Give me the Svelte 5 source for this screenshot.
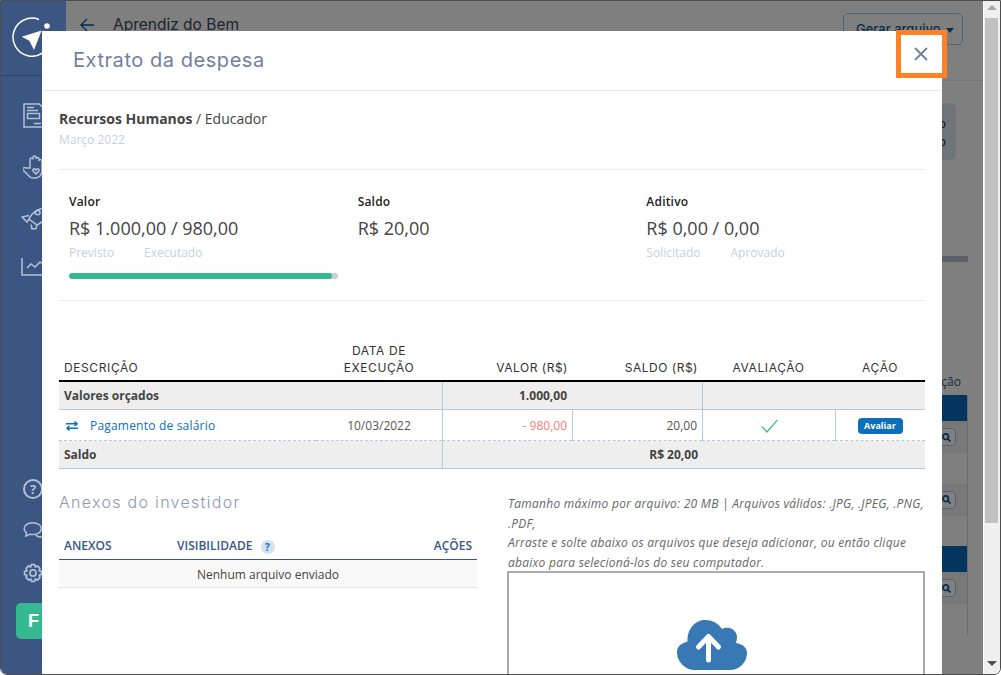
<script>
  const bgRows = ['blue','band','plain','band','plain','blue','band','plain'];
  const stats = [
    { title: 'Valor', value: 'R$ 1.000,00 / 980,00', a: 'Previsto', b: 'Executado', pct: 97.8 },
    { title: 'Saldo', value: 'R$ 20,00' },
    { title: 'Aditivo', value: 'R$ 0,00 / 0,00', a: 'Solicitado', b: 'Aprovado' }
  ];
</script>

<div class="window">
  <aside class="sidebar">
    <div class="logo">
      <svg width="44" height="44" viewBox="0 0 44 44" fill="none">
        <path d="M27 2.500A19 19 0 1 0 38.800 23" stroke="#fff" stroke-width="1.500"/>
        <circle cx="35" cy="9" r="2.800" fill="#fff"/>
        <path d="M9.700 19.700 29.600 13.600 22 33 17.300 23.700z" fill="#fff"/>
      </svg>
    </div>
    <nav class="nav">
      <svg width="26" height="25" viewBox="0 0 26 25" fill="none" stroke="#b3c1d8" stroke-width="1.500"><path d="M1 1h15l7 6v17H1z"/><path d="M4 4.500h7M4 7.500h11"/><rect x="4.500" y="10.500" width="12" height="5"/><path d="M11 20.500h7"/></svg>
      <svg width="26" height="24" viewBox="0 0 26 24" fill="none" stroke="#b3c1d8" stroke-width="1.500"><path d="M7 13V4.500a1.500 1.500 0 0 1 3 0V2.500a1.500 1.500 0 0 1 3 0v1.500a1.500 1.500 0 0 1 3 0v2a1.500 1.500 0 0 1 3 0v10c0 4-3 7-7 7h-2c-2 0-3.500-1-5-3l-5-5c-1-2 1-3 3-2z"/><path d="M13 19l-3-3c-1-2 2-3 3-1 1-2 4-1 3 1z"/></svg>
      <svg class="shift" width="28" height="24" viewBox="0 0 28 24" fill="none" stroke="#b3c1d8" stroke-width="1.500"><path d="M8 13C11 6 19 2 28 1c0 8-4 14-12 18z"/><circle cx="16.700" cy="6.500" r="2.300"/><path d="M8 9.500 1 11l5 5 2-3M16 19l-1 3.500-4 .5-1-4.500"/></svg>
      <svg class="shift" width="28" height="20" viewBox="0 0 28 20" fill="none" stroke="#b3c1d8" stroke-width="1.500"><path d="M1 1v17h27"/><path d="M6 11l4-4 4 3 5-5 3 2 4-3"/></svg>
    </nav>
    <div class="foot">
      <span class="help">?</span>
      <svg class="chat" width="22" height="18" viewBox="0 0 26 22" fill="none" stroke="#b3c1d8" stroke-width="1.800"><path d="M11 1C5 1 1 4.500 1 8c0 2 1 4 3 5l-1 4 5-2c5 1 13 0 14-7 0-4-5-7-11-7z"/><path d="M15 16c2 2 5 3 9 2"/></svg>
      <svg class="gear" width="20" height="20" viewBox="0 0 26 26" fill="none" stroke="#b3c1d8" stroke-width="2.200"><circle cx="13" cy="13" r="4"/><path d="M11 2h4l1 3 3-1 3 3-1 3 3 1v4l-3 1 1 3-3 3-3-1-1 3h-4l-1-3-3 1-3-3 1-3-3-1v-4l3-1-1-3 3-3 3 1z"/></svg>
      <div class="f-btn">F</div>
    </div>
  </aside>

  <main class="main">
    <header class="top">
      <svg class="back" width="14" height="14" viewBox="0 0 14 14" fill="none" stroke="#0a5a9e" stroke-width="1.300"><path d="M14 7H1M7 1 1 7l6 6"/></svg>
      <span class="proj">Aprendiz do Bem</span>
      <button class="gen">Gerar arquivo <i class="caret"></i></button>
    </header>
    <div class="content">
      <div class="card"><span>Executado</span><span>Aprovado</span></div>
      <div class="bar"></div>
      <div class="bg-head">Ação</div>
      <div class="bg-table">
        {#each bgRows as r}
          <div class="bg-row {r}">
            {#if r === 'band'}
              <span class="search">
                <svg width="9" height="9" viewBox="0 0 9 9" fill="none" stroke="#0a5a9e" stroke-width="1.700"><circle cx="3.700" cy="3.700" r="2.800"/><path d="M6 6l2.500 2.500"/></svg>
              </span>
            {/if}
          </div>
        {/each}
      </div>
    </div>
    <div class="overlay"></div>
  </main>

  <div class="scroll">
    <span class="up"></span>
    <div class="thumb"></div>
    <span class="down"></span>
  </div>

  <section class="modal">
    <div class="m-head">
      <h2>Extrato da despesa</h2>
      <button class="close" aria-label="Fechar">
        <svg width="14" height="14" viewBox="0 0 14 14" stroke="#6f80a0" stroke-width="1.800" fill="none"><path d="M1 1l12 12M13 1 1 13"/></svg>
      </button>
    </div>
    <div class="m-body">
      <div class="crumb"><b>Recursos Humanos</b> / Educador</div>
      <div class="month">Março 2022</div>
      <hr class="hr1" />
      <div class="stats">
        {#each stats as s}
          <div class="stat">
            <div class="s-title">{s.title}</div>
            <div class="s-value">{s.value}</div>
            {#if s.a}
              <div class="s-labels"><span>{s.a}</span><span>{s.b}</span></div>
            {/if}
            {#if s.pct}
              <div class="progress"><div class="fill" style="width:{s.pct}%"></div></div>
            {/if}
          </div>
        {/each}
      </div>
      <hr class="hr2" />

      <div class="table">
        <div class="th left">DESCRIÇÃO</div>
        <div class="th center">DATA DE<br />EXECUÇÃO</div>
        <div class="th right">VALOR (R$)</div>
        <div class="th right">SALDO (R$)</div>
        <div class="th center">AVALIAÇÃO</div>
        <div class="th center">AÇÃO</div>

        <div class="td grey bold s2">Valores orçados</div>
        <div class="td grey bold right s2 lb pr-135">1.000,00</div>
        <div class="td grey lb s2"></div>

        <div class="td row link">
          <svg width="12" height="10" viewBox="0 0 12 10" fill="none" stroke="#0b6fbd" stroke-width="1.500"><path d="M0 2.800h11M8.500.5 11 2.800 8.500 5M12 7.200H1M3.500 5 1 7.200l2.500 2.300"/></svg>
          <span>Pagamento de salário</span>
        </div>
        <div class="td row center">10/03/2022</div>
        <div class="td row right lb neg">- 980,00</div>
        <div class="td row right lb">20,00</div>
        <div class="td row center lb">
          <svg width="17" height="14" viewBox="0 0 17 14" fill="none" stroke="#35ba8f" stroke-width="1.200"><path d="M.8 7.500 6 13 16.500.8"/></svg>
        </div>
        <div class="td row center lb"><span class="badge">Avaliar</span></div>

        <div class="td grey bold s2">Saldo</div>
        <div class="td grey bold right s4 lb pr-227">R$ 20,00</div>
      </div>

      <div class="cols">
        <div class="attach">
          <h3>Anexos do investidor</h3>
          <div class="a-head">
            <span class="a1">ANEXOS</span>
            <span class="a2">VISIBILIDADE <i class="q">?</i></span>
            <span class="a3">AÇÕES</span>
          </div>
          <div class="a-empty">Nenhum arquivo enviado</div>
        </div>
        <div class="upload">
          <p>Tamanho máximo por arquivo: 20 MB | Arquivos válidos: .JPG, .JPEG, .PNG, .PDF,<br />Arraste e solte abaixo os arquivos que deseja adicionar, ou então clique abaixo para selecioná-los do seu computador.</p>
          <div class="drop">
            <svg width="71" height="50" viewBox="0 0 71 50">
              <path fill="#3778b5" d="M18 50A18 18 0 0 1 0 32C0 26 5 23 10.500 21.500 10 8 19 0 28 0 35 0 41 3 45 9A10 10 0 0 1 60 17C60 19 59.500 21 59 23 65 24 70 27 70 33A17 17 0 0 1 53 50z"/>
              <path fill="none" stroke="#fff" stroke-width="5" stroke-linecap="round" stroke-linejoin="round" d="M31.500 40V16.500M21.500 27 31.500 16.500 41.500 27"/>
            </svg>
          </div>
        </div>
      </div>
    </div>
  </section>

  <div class="highlight"></div>
</div>

<style>
  :global(body) { margin: 0; background: #fff; }
  * { box-sizing: border-box; }
  .window {
    position: relative; width: 1001px; height: 675px; display: flex; overflow: hidden;
    border: 1px solid #4d4d4d; border-radius: 0 0 7px 7px;
    font-family: "Open Sans", sans-serif; background: #fff;
  }
  .sidebar { width: 65px; background: #3b5682; display: flex; flex-direction: column; flex: none; }
  .logo { height: 75px; border-bottom: 1px solid #2f466b; padding: 16px 0 0 11px; }
  .nav { display: flex; flex-direction: column; align-items: flex-start; gap: 27px; padding: 27px 0 0 22px; }
  .shift { margin-left: -2px; }
  .foot { margin-top: auto; display: flex; flex-direction: column; align-items: flex-start; padding: 0 0 35px 22px; }
  .help { width: 20px; height: 20px; border: 2px solid #b3c1d8; border-radius: 50%; color: #b3c1d8; font-size: 13px; font-weight: 700; line-height: 16px; text-align: center; }
  .chat { margin-top: 23px; }
  .gear { margin-top: 23px; }
  .f-btn { margin: 20px 0 0 -7px; width: 44px; height: 36px; background: #35ba8f; border-radius: 5px; color: #fff; font: 700 18px/36px "Liberation Sans", sans-serif; padding-left: 12px; }

  .main { position: relative; flex: 1; background: #fff; min-width: 0; }
  .overlay { position: absolute; inset: 0; background: rgba(0,0,0,.5); }
  .top { height: 80px; border-bottom: 1px solid #e8e8e8; display: flex; align-items: flex-start; padding: 12px 20px 0 14px; }
  .back { margin-top: 5px; }
  .proj { margin-left: 19px; font: 400 15.500px/24px Inter, sans-serif; color: #3d4a66; }
  .gen { margin-left: auto; width: 120px; height: 32px; border: 1.500px solid #a9c4dc; border-radius: 5px; background: #fff; color: #0a5a9e; font: 500 13px Inter, sans-serif; text-align: left; padding: 0 0 0 12px; }
  .caret { display: inline-block; border: 4px solid transparent; border-top: 5px solid #0a5a9e; border-bottom: 0; margin-left: 2px; vertical-align: middle; }
  .content { padding: 22px 15px 0 0; }
  .card { margin: 0 12px 0 0; height: 57px; background: #dde9f2; border-radius: 6px; display: flex; flex-direction: column; align-items: flex-end; justify-content: center; padding-right: 10px; font-size: 13px; line-height: 18px; color: #222; }
  .bar { height: 6px; margin-top: 96px; background: #b6c0d6; }
  .bg-head { margin-top: 110px; height: 20px; margin-bottom: 3px; text-align: right; padding-right: 7px; font: 12px/20px "Open Sans", sans-serif; color: #3a5783; }
  .bg-table { border-right: 1px solid #d6d6d6; }
  .bg-row { display: flex; align-items: center; justify-content: flex-end; padding-right: 11px; }
  .blue { height: 26px; background: #066abe; }
  .band { height: 32px; background: #f0f0f0; }
  .plain { height: 30.500px; }
  .search { width: 26px; height: 18px; background: #fff; border: 1px solid #a9c4dc; border-radius: 4px; display: flex; align-items: center; padding-left: 11px; }

  .scroll { width: 17px; background: #f0f0f0; border-left: 1px solid #fff; position: relative; flex: none; }
  .thumb { position: absolute; left: 1px; top: 17px; width: 13px; height: 505px; background: #c1c1c1; }
  .up, .down { position: absolute; left: 3px; width: 0; height: 0; border: 5px solid transparent; }
  .up { top: 4px; border-bottom: 5px solid #a6a6a6; border-top: 0; }
  .down { bottom: 8px; border-top: 5px solid #505050; border-bottom: 0; }

  .modal { position: absolute; left: 41px; top: 30px; bottom: -1px; width: 900px; background: #fff; overflow: hidden; }
  .m-head { height: 60px; border-bottom: 1px solid #e6e6e6; display: flex; align-items: center; justify-content: space-between; padding: 0 14px 0 31px; }
  h2 { margin: 0 0 2px; font: 400 20px/1 Inter, sans-serif; letter-spacing: .55px; color: #6f80a0; }
  .close { background: none; border: 0; padding: 0; width: 14px; height: 14px; display: block; align-self: flex-start; margin-top: 16px; }
  .close svg { display: block; }
  .m-body { padding: 18px 17px 0; }
  .crumb { font-size: 14px; line-height: 20px; color: #444; }
  .crumb b { font-weight: 700; }
  .month { font-size: 12px; line-height: 20px; margin-top: 1px; color: #c5d0e0; }
  hr { border: 0; border-top: 1px solid #ececec; margin: 0; }
  .hr1 { margin-top: 19px; }
  .stats { display: grid; grid-template-columns: repeat(3, 1fr); height: 130px; padding-top: 23px; }
  .stat { padding: 0 10px; }
  .s-title { font-size: 12px; font-weight: 600; line-height: 18px; color: #222; letter-spacing: .2px; }
  .s-value { font-size: 18px; line-height: 28px; margin-top: 3px; color: #444; }
  .s-labels { display: flex; gap: 30px; margin-top: 1px; font-size: 12px; line-height: 20px; color: #c5d0e0; }
  .progress { height: 6px; margin-top: 10px; background: #c5d0e0; border-radius: 3px; overflow: hidden; }
  .fill { height: 100%; background: #35ba8f; border-radius: 3px; }

  .table { display: grid; grid-template-columns: 257px 126px 130px 130px 133px 90px; margin-top: 41px; }
  .th { font: 400 12px/17px Inter, sans-serif; letter-spacing: .6px; color: #333; border-bottom: 2px solid #000; padding: 0 5px 4px 5px; display: flex; flex-direction: column; justify-content: flex-end; }
  .th.center { text-align: center; padding-left: 0; padding-right: 0; }
  .th.right { text-align: right; letter-spacing: .5px; padding-right: 4px; }
  .td { font-size: 12px; line-height: 18px; padding: 0 5px; display: flex; align-items: center; height: 28px; color: #555; border-bottom: 1px solid #b9c7d9; }
  .td.center { justify-content: center; }
  .td.right { justify-content: flex-end; }
  .grey { background: #eee; }
  .bold { font-weight: 700; color: #444; }
  .s2 { grid-column: span 2; }
  .s4 { grid-column: span 4; }
  .lb { border-left: 1px solid #b9c7d9; }
  .td.pr-135 { padding-right: 135px; }
  .td.pr-227 { padding-right: 227px; }
  .td.row { height: 31px; padding-top: 1px; border-bottom: 1px dashed #b9c7d9; }
  .link { color: #0b6fbd; letter-spacing: .2px; gap: 12px; padding-left: 7px; }
  .neg { color: #f08080; }
  .badge { background: #0b6fbd; color: #fff; border-radius: 4px; font-size: 9px; font-weight: 700; line-height: 16px; width: 45px; text-align: center; margin-left: -1px; }

  .cols { display: grid; grid-template-columns: 418px 418px; gap: 30px; margin-top: 23px; }
  h3 { margin: 0; font: 300 16px/20px Inter, sans-serif; letter-spacing: 1.300px; color: #8c99b2; }
  .a-head { height: 29px; margin-top: 19px; border-bottom: 1px solid #3a5783; font-size: 12px; font-weight: 600; color: #3a5783; display: flex; padding: 5px 5px 0; line-height: 20px; }
  .a1 { width: 113px; }
  .a3 { margin-left: auto; }
  .q { display: inline-block; width: 14px; height: 14px; margin-left: 5px; border-radius: 50%; background: #d3e2f0; color: #0b6fbd; font: 700 10px/14px "Open Sans", sans-serif; text-align: center; vertical-align: -1px; }
  .a-empty { height: 28px; padding-top: 1px; background: #f9f9f9; border-bottom: 1px dotted #d5d5d5; text-align: center; font-size: 12px; line-height: 27px; color: #444; }
  .upload p { margin: 2px 0 0 1px; font-size: 12px; font-style: italic; line-height: 19.500px; letter-spacing: .26px; color: #666; }
  .drop { height: 200px; margin-top: -1px; border: 2px solid #aaa; padding: 47px 8px 0 0; display: flex; justify-content: center; align-items: flex-start; }
  .highlight { position: absolute; left: 895px; top: 29px; width: 51px; height: 48px; border: 5px solid #ff8227; }
</style>
